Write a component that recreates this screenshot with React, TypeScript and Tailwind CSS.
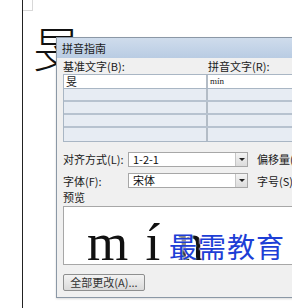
import React from 'react';

const cjk = { fontFamily: '"Noto Sans CJK SC", "Noto Sans", sans-serif' };

function Dropdown({ value }: { value: string }) {
  return (
    <div className="flex h-[15px] w-[120px] items-center border border-[#a7a7a7] bg-white">
      <span className="flex-1 pl-[4px] text-[11px] leading-none text-[#111]">{value}</span>
      <div className="flex h-[13px] w-[12px] items-center justify-center border-l border-[#c6c6c6] bg-gradient-to-b from-[#f4f4f4] to-[#dcdcdc]">
        <div className="h-0 w-0 border-x-[3px] border-t-[3px] border-x-transparent border-t-[#222]" />
      </div>
    </div>
  );
}

export default function App() {
  const rows = [0, 1, 2, 3];

  return (
    <div className="relative h-[308px] w-[292px] overflow-hidden bg-white" style={cjk}>
      {/* document page */}
      <div className="ml-[22px] h-full border-l border-[#222]">
        <div className="h-[11px] w-[10px] border-b border-r border-[#d8d8d8]" />
        <div className="ml-[10px] mt-[11px] text-[48px] font-light leading-none text-[#111]">旻</div>
      </div>

      {/* dialog window */}
      <div className="absolute left-[56px] top-[37px] w-[260px] border border-[#8b98a6] bg-[#f0f0f0] shadow-[0_1px_2px_rgba(0,0,0,0.15)]">
        <div className="flex h-[20px] items-center bg-gradient-to-b from-[#cfdcec] to-[#b9cce3] pl-[5px] text-[11px] text-[#1c1c1c]">
          拼音指南
        </div>

        <div className="pl-[6px] pr-[6px] pb-[6px] text-[11px] text-[#1a1a1a]">
          <div className="flex h-[16px] items-center">
            <span className="w-[145px]">基准文字(B):</span>
            <span>拼音文字(R):</span>
          </div>

          {/* base / ruby table */}
          <div className="border border-[#a9b6c4]">
            <div className="flex h-[14px] border-b border-[#a9b6c4] bg-white">
              <div className="flex w-[144px] items-center border-r-2 border-[#b3bcc6] pl-[2px] text-[11px]">旻</div>
              <div
                className="flex items-center pl-[2px] text-[9px] text-[#222]"
                style={{ fontFamily: '"Liberation Serif", serif' }}
              >
                mín
              </div>
            </div>
            {rows.map((r) => (
              <div key={r} className="flex h-[13px] border-b-2 border-[#b7c2cf] bg-[#e7ecf3] last:border-b-0">
                <div className="w-[144px] border-r-2 border-[#b3bcc6]" />
                <div className="flex-1" />
              </div>
            ))}
          </div>

          <div className="mt-[9px] flex items-center">
            <span className="w-[65px]">对齐方式(L):</span>
            <Dropdown value="1-2-1" />
            <span className="ml-[9px]">偏移量(O)</span>
          </div>
          <div className="mt-[5px] flex items-center">
            <span className="w-[65px]">字体(F):</span>
            <Dropdown value="宋体" />
            <span className="ml-[9px]">字号(S)</span>
          </div>

          <div className="flex h-[17px] items-center">预览</div>
          <div className="h-[59px] overflow-hidden border border-[#a7a7a7] bg-white">
            <div
              className="ml-[23px] mt-[9px] text-[53px] leading-none text-[#111]"
              style={{ fontFamily: '"Liberation Serif", serif', wordSpacing: '4px' }}
            >
              m í n
            </div>
          </div>

          <div className="mt-[9px] flex h-[17px] w-[82px] items-center justify-center rounded-[2px] border border-[#8e8f8f] bg-gradient-to-b from-[#f3f3f3] to-[#dadada] text-[11px] text-[#333]">
            全部更改(A)...
          </div>
        </div>
      </div>

      {/* watermark */}
      <div
        className="absolute left-[169px] top-[232px] text-[28px] leading-none tracking-[1px] text-[#1d3ed6]"
        style={{ textShadow: '0 0 2px #fff, 0 0 2px #fff' }}
      >
        最需教育
      </div>
    </div>
  );
}
